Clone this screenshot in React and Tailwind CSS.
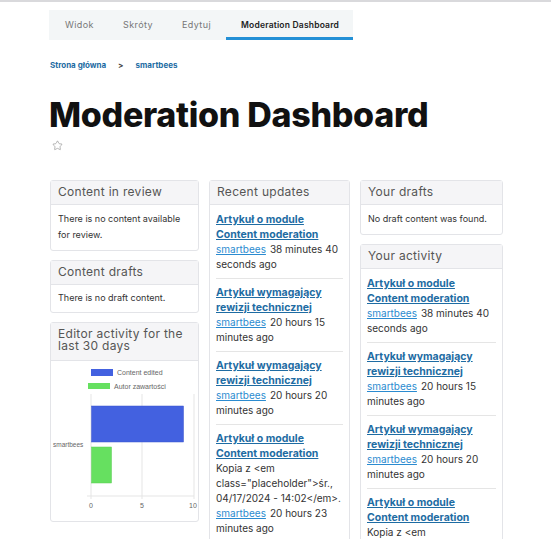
import { Star } from 'lucide-react';

const recent = [
  { title: ['Artykuł o module', 'Content moderation'], time: '38 minutes 40 seconds ago' },
  { title: ['Artykuł wymagający', 'rewizji technicznej'], time: '20 hours 15 minutes ago' },
  { title: ['Artykuł wymagający', 'rewizji technicznej'], time: '20 hours 20 minutes ago' },
  {
    title: ['Artykuł o module', 'Content moderation'],
    note: 'Kopia z <em class="placeholder">śr., 04/17/2024 - 14:02</em>.',
    time: '20 hours 23 minutes ago',
  },
];

function Card({ title, children, className = '' }) {
  return (
    <div className={`rounded-[3px] border border-[#e3e4e8] bg-white ${className}`}>
      <div className="border-b border-[#e3e4e8] bg-[#f5f5f7] px-[7px] pt-[4px] pb-[5px] text-[12px] leading-[14px] tracking-[0.3px] text-[#555]">
        {title}
      </div>
      {children}
    </div>
  );
}

function Item({ item }) {
  return (
    <li className="border-b border-[#e5e5e5] py-[6px]">
      <a className="block text-[10.5px] font-bold leading-[15px] text-[#1e6ca3] underline">
        {item.title[0]}
        <br />
        {item.title[1]}
      </a>
      {item.note && <p className="text-[10px] leading-[15px] text-[#333]">{item.note}</p>}
      <p className="text-[10px] leading-[15px] text-[#333]">
        <a className="text-[#2b8bd0] underline">smartbees</a>
        <span className="ml-[4px]">{item.time}</span>
      </p>
    </li>
  );
}

function Chart() {
  return (
    <svg width="148" height="160" viewBox="0 0 148 160" className="block">
      <rect x="40" y="8" width="22" height="7" fill="#4361e0" />
      <text x="66" y="14" fontSize="7" fill="#666" fontFamily="Liberation Sans, sans-serif">Content edited</text>
      <rect x="37" y="22" width="22" height="6" fill="#66e060" />
      <text x="63" y="28" fontSize="7" fill="#666" fontFamily="Liberation Sans, sans-serif">Autor zawartości</text>
      <line x1="40" y1="33" x2="40" y2="138" stroke="#e5e5e5" />
      <line x1="91" y1="33" x2="91" y2="138" stroke="#e5e5e5" />
      <line x1="143" y1="33" x2="143" y2="138" stroke="#e5e5e5" />
      <line x1="36" y1="135" x2="143" y2="135" stroke="#e5e5e5" />
      <rect x="40.5" y="45" width="92" height="36" fill="#4361e0" stroke="#3a55cc" strokeWidth="0.5" />
      <rect x="40.5" y="86" width="20" height="36" fill="#66e060" stroke="#5ccc56" strokeWidth="0.5" />
      <text x="2" y="86" fontSize="6.5" fill="#666" fontFamily="Liberation Sans, sans-serif">smartbees</text>
      <text x="40" y="147" fontSize="7" fill="#666" textAnchor="middle" fontFamily="Liberation Sans, sans-serif">0</text>
      <text x="91" y="147" fontSize="7" fill="#666" textAnchor="middle" fontFamily="Liberation Sans, sans-serif">5</text>
      <text x="142" y="147" fontSize="7" fill="#666" textAnchor="middle" fontFamily="Liberation Sans, sans-serif">10</text>
    </svg>
  );
}

export default function App() {
  return (
    <div className="h-[539px] overflow-hidden border-t-2 border-[#d9d9dc] bg-white font-['Inter','Noto_Sans',sans-serif] text-[#222]">
      <div className="pl-[49px] pt-[8px]">
        <nav className="flex h-[30px] w-[304px] whitespace-nowrap bg-[#f3f6f7] text-[9px]">
          <a className="flex w-[58px] items-center pl-[16px] tracking-[0.4px] text-[#777]">Widok</a>
          <a className="flex w-[59px] items-center pl-[16px] tracking-[0.4px] text-[#777]">Skróty</a>
          <a className="flex w-[60px] items-center pl-[16px] tracking-[0.4px] text-[#777]">Edytuj</a>
          <a className="flex w-[127px] items-center border-b-[3px] border-[#2390d6] pl-[15px] pt-[3px] text-[8.5px] font-semibold tracking-[0.2px] text-[#222]">
            Moderation Dashboard
          </a>
        </nav>
      </div>

      <div className="flex items-center gap-[12px] pl-[50px] pt-[19px] text-[8px] font-bold text-[#1e6ca3]">
        <a>Strona główna</a>
        <span className="text-[#444]">&gt;</span>
        <a>smartbees</a>
      </div>

      <h1 className="pl-[49px] pt-[24px] text-[34px] leading-[40px] font-extrabold tracking-[-0.3px] text-[#111]">
        Moderation Dashboard
      </h1>
      <div className="pl-[52px] pt-[5px] text-[#888]">
        <Star size={11} strokeWidth={1.3} />
      </div>

      <div className="flex items-start gap-[10px] pl-[50px] pt-[29px]">
        <div className="flex w-[149px] flex-col gap-[9px]">
          <Card title="Content in review">
            <p className="px-[7px] pt-[6px] pb-[7px] text-[9px] leading-[16px] text-[#333]">
              There is no content available for review.
            </p>
          </Card>
          <Card title="Content drafts">
            <p className="px-[7px] pt-[5px] pb-[6px] text-[9px] leading-[16px] text-[#333]">
              There is no draft content.
            </p>
          </Card>
          <Card title={<span className="block pt-[1px] pb-[3px] leading-[12px]">Editor activity for the<br />last 30 days</span>}>
            <Chart />
          </Card>
        </div>

        <Card title="Recent updates" className="w-[141px]">
          <ul className="px-[6px] pt-[1px]">
            {recent.map((it, i) => (
              <Item key={i} item={it} />
            ))}
          </ul>
        </Card>

        <div className="flex w-[143px] flex-col gap-[9px]">
          <Card title="Your drafts">
            <p className="px-[7px] pt-[6px] pb-[7px] text-[9px] leading-[16px] text-[#333]">
              No draft content was found.
            </p>
          </Card>
          <Card title="Your activity">
            <ul className="px-[6px] pt-[1px]">
              {recent.map((it, i) => (
                <Item key={i} item={it} />
              ))}
            </ul>
          </Card>
        </div>
      </div>
    </div>
  );
}
